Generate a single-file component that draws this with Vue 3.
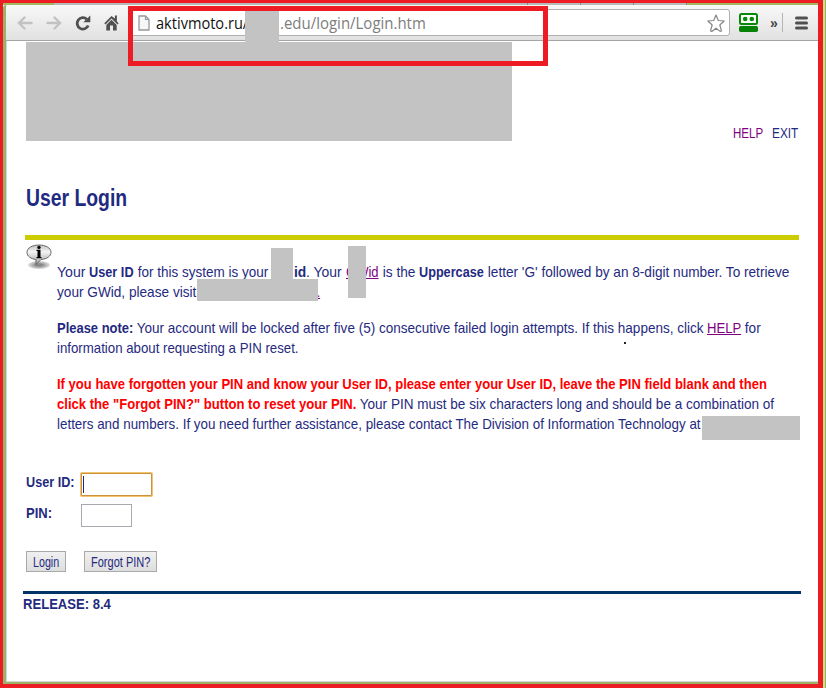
<script setup>
import { ref } from 'vue';

const userId = ref('');
const pin = ref('');

// Squeezes a run of text to the given width in pixels
const vFit = {
  mounted(el, binding) {
    const inner = el.firstElementChild;
    el.style.width = binding.value + 'px';
    inner.style.transform = `scaleX(${binding.value / inner.offsetWidth})`;
  },
};
</script>

<template>
  <div class="screen">
    <div class="tabs">
      <span class="tab-edge"></span>
      <span class="tab-edge"></span>
      <span class="tab-edge"></span>
      <span class="tab-edge"></span>
    </div>
    <div class="window">
      <header class="toolbar">
        <svg class="icon back" width="16" height="14" viewBox="0 0 16 14">
          <path d="M7.500 1.500 2 7l5.500 5.500M2.500 7H14.500" fill="none" stroke="#c2c2c2" stroke-width="2.400" stroke-linecap="round" />
        </svg>
        <svg class="icon forward" width="16" height="14" viewBox="0 0 16 14">
          <path d="M8.500 1.500 14 7l-5.500 5.500M13.500 7H1.500" fill="none" stroke="#c2c2c2" stroke-width="2.400" stroke-linecap="round" />
        </svg>
        <svg class="icon reload" width="16" height="16" viewBox="0 0 16 16">
          <path d="M11.800 4.200A5.700 5.700 0 1 0 13.200 10.500" fill="none" stroke="#505050" stroke-width="2.800" />
          <path d="M15.300 .5v6.700H8.300z" fill="#505050" />
        </svg>
        <svg class="icon home" width="15" height="16" viewBox="0 0 15 16">
          <path d="M7.500 1 .3 8.200l1.200 1.200 6-5.900 6 5.900 1.200-1.200-1.800-1.800V.5h-2v3z" fill="#505050" />
          <path d="m7.500 4.700 5.200 5.200v5.600H9v-5H6v5H2.300V9.900z" fill="#505050" />
        </svg>
        <div class="address">
          <svg class="doc" width="12" height="16" viewBox="0 0 12 16">
            <path d="M1 1h6.500L11 4.500V15H1z" fill="#f7f7f7" stroke="#999" stroke-width="1.300" />
            <path d="M7.500 1v3.500H11" fill="none" stroke="#999" stroke-width="1.200" />
          </svg>
          <span class="host" v-fit="92"><span>aktivmoto.ru/</span></span>
          <span class="path" v-fit="146"><span>.edu/login/Login.htm</span></span>
          <svg class="star" width="18" height="18" viewBox="0 0 18 18">
            <path d="m9 1 2.300 5.500 5.900.5-4.400 4 1.700 5.900q-1 .8-2 0L9 14.200l-3.500 2.700q-1 .8-2 0L5.200 11 .8 7l5.900-.5z" fill="#fff" stroke="#858585" stroke-width="1.200" stroke-linejoin="round" />
          </svg>
        </div>
        <svg class="robo" width="19" height="19" viewBox="0 0 19 19">
          <rect x="1" y="1" width="17" height="10" rx="1.500" fill="#fff" stroke="#078a07" stroke-width="2" />
          <circle cx="6.200" cy="6" r="2.300" fill="#078a07" />
          <circle cx="12.800" cy="6" r="2.300" fill="#078a07" />
          <rect x="0" y="13" width="19" height="6" rx="1.800" fill="#068306" />
        </svg>
        <span class="more">»</span>
        <span class="divider"></span>
        <svg class="menu" width="13" height="14" viewBox="0 0 13 14">
          <path d="M1.500 2h10M1.500 7h10M1.500 12h10" stroke="#505050" stroke-width="3" stroke-linecap="round" />
        </svg>
      </header>

      <main class="page">
        <div class="banner"></div>
        <nav class="links">
          <a class="visited" v-fit="30"><span>HELP</span></a>
          <a v-fit="26"><span>EXIT</span></a>
        </nav>
        <h1><span v-fit="101"><span>User Login</span></span></h1>
        <hr class="gold" />
        <section class="info">
          <svg class="bubble" width="26" height="26" viewBox="0 0 26 26">
            <defs>
              <linearGradient id="shine" x1="0" y1="0" x2="0" y2="1">
                <stop offset="0" stop-color="#c0c0c0" />
                <stop offset=".35" stop-color="#f4f4f4" />
                <stop offset="1" stop-color="#a0a0a0" />
              </linearGradient>
              <radialGradient id="shadow">
                <stop offset=".3" stop-color="#888" />
                <stop offset="1" stop-color="#bbb" stop-opacity=".5" />
              </radialGradient>
            </defs>
            <ellipse cx="13" cy="21" rx="11" ry="4" fill="url(#shadow)" />
            <path d="M13 1C6.500 1 1 3.800 1 8.300c0 3.900 4 6.700 9 7.200v5l5-5c6-.4 10-3.400 10-7.200 0-4.500-5.500-7.300-12-7.300z" fill="url(#shine)" stroke="#666" stroke-width="1" />
            <path d="M10.500 5.800h4V13h1v1.200h-5V13h1V7h-1z" fill="#000" />
            <circle cx="13" cy="3.400" r="1.700" fill="#000" />
          </svg>
          <div class="copy">
            <p>
              <span class="line">
                <span v-fit="32"><span>Your&nbsp;</span></span><b v-fit="45"><span>User ID</span></b><span v-fit="134"><span>&nbsp;for this system is your</span></span><b class="your-id" v-fit="12"><span>id</span></b><span v-fit="40"><span>. Your&nbsp;</span></span><a class="visited underlined" v-fit="33"><span>GWid</span></a><span v-fit="40"><span>&nbsp;is the&nbsp;</span></span><b v-fit="65"><span>Uppercase</span></b><span v-fit="305"><span>&nbsp;letter 'G' followed by an 8-digit number. To retrieve</span></span>
              </span>
              <span class="line">
                <span v-fit="139"><span>your GWid, please visit</span></span><a class="visited underlined site" v-fit="3"><span>.</span></a>
              </span>
            </p>
            <p>
              <span class="line">
                <b v-fit="76"><span>Please note:</span></b><span v-fit="574"><span>&nbsp;Your account will be locked after five (5) consecutive failed login attempts. If this happens, click&nbsp;</span></span><a class="visited underlined" v-fit="34"><span>HELP</span></a><span v-fit="20"><span>&nbsp;for</span></span>
              </span>
              <span class="line"><span v-fit="242"><span>information about requesting a PIN reset.</span></span></span>
            </p>
            <p>
              <span class="line warn"><b v-fit="710"><span>If you have forgotten your PIN and know your User ID, please enter your User ID, leave the PIN field blank and then</span></b></span>
              <span class="line"><b class="warn" v-fit="299"><span>click the "Forgot PIN?" button to reset your PIN.</span></b><span v-fit="418"><span>&nbsp;Your PIN must be six characters long and should be a combination of</span></span></span>
              <span class="line"><span v-fit="644"><span>letters and numbers. If you need further assistance, please contact The Division of Information Technology at</span></span></span>
            </p>
          </div>
        </section>

        <form class="login" @submit.prevent>
          <div class="field">
            <label for="user-id"><span v-fit="49"><span>User ID:</span></span></label>
            <div class="user-box">
              <input id="user-id" v-model="userId" class="user-input" type="text" />
            </div>
          </div>
          <div class="field">
            <label for="pin"><span v-fit="26"><span>PIN:</span></span></label>
            <input id="pin" v-model="pin" class="pin-input" type="password" />
          </div>
          <div class="buttons">
            <button type="submit" class="login-button"><span v-fit="26"><span>Login</span></span></button>
            <button type="button" class="forgot-button"><span v-fit="59"><span>Forgot PIN?</span></span></button>
          </div>
        </form>
        <hr class="navy" />
        <footer><span v-fit="88"><span>RELEASE: 8.4</span></span></footer>
      </main>
    </div>

    <!-- Redacted areas and the highlight over the address -->
    <i class="cover cover-host"></i>
    <i class="cover cover-name"></i>
    <i class="cover cover-gwid"></i>
    <i class="cover cover-site"></i>
    <i class="cover cover-contact"></i>
    <i class="speck"></i>
    <i class="highlight"></i>
    <i class="frame"></i>
    <i class="window-edge"></i>
  </div>
</template>

<style>
body {
  margin: 0;
  overflow: hidden;
}
</style>

<style scoped>
.screen {
  position: relative;
  width: 826px;
  height: 688px;
  box-sizing: border-box;
  padding: 3px 8px 4px 3px;
  overflow: hidden;
  background: #fff;
  font-family: "Liberation Sans", Arial, sans-serif;
  font-size: 15px;
  color: #1f2a80;
}

.tabs {
  display: flex;
  justify-content: flex-end;
  height: 2px;
  box-sizing: border-box;
  padding-right: 131px;
  background: linear-gradient(90deg, #a3b75f 0 51px, #b9b9b9 51px 683px, #a3b75f 683px);
}

.tab-edge {
  width: 52px;
  border-right: 1px solid #888;
}

.window {
  height: 679px;
  box-sizing: border-box;
  border-left: 3px solid #9eb267;
  border-bottom: 2px solid #9eb267;
  border-top-left-radius: 3px;
  box-shadow: inset 1px -1px #d5d5d5;
}

.toolbar {
  display: flex;
  align-items: center;
  height: 36px;
  box-sizing: border-box;
  padding-left: 11px;
  border-bottom: 1px solid #a5a5a5;
  border-top-left-radius: 3px;
  background: linear-gradient(#f8f8f8, #e1e1e1);
}

.icon {
  flex: none;
}

.forward {
  margin-left: 13px;
}

.reload {
  margin-left: 13px;
}

.home {
  margin-left: 13px;
}

.address {
  display: flex;
  align-items: center;
  width: 600px;
  height: 27px;
  box-sizing: border-box;
  margin-left: 11px;
  padding: 0 4px 0 7px;
  border: 1px solid #b0b0b0;
  border-radius: 3px;
  background: #fff;
  font: 16px/22px "Open Sans", "Noto Sans", sans-serif;
}

.doc {
  margin-right: 6px;
}

.host {
  color: #111;
}

.path {
  margin-left: 32px;
  color: #7d7d7d;
}

.star {
  margin-left: auto;
}

.robo {
  margin-left: 9px;
}

.more {
  width: 9px;
  margin-left: 12px;
  color: #444;
  font: bold 14px/18px "Liberation Sans", sans-serif;
}

.divider {
  width: 1px;
  height: 19px;
  margin-left: 3px;
  background: #b5b5b5;
}

.menu {
  margin-left: 12px;
}

.page {
  padding: 1px 17px 0 17px;
}

.banner {
  width: 486px;
  height: 99px;
  margin-left: 3px;
  background: #c3c3c3;
}

.links {
  display: flex;
  justify-content: flex-end;
  gap: 9px;
  height: 16px;
  margin-top: -16px;
  padding-right: 3px;
  line-height: 16px;
}

.host > span,
.path > span,
.page a > span,
.page span > span:only-child,
.page b > span {
  display: inline-block;
  transform-origin: 0 50%;
  white-space: nowrap;
}

.host,
.path,
.page a,
.line > *,
h1 > span,
label > span,
button > span,
footer > span {
  display: block;
  flex: none;
  white-space: nowrap;
}

.visited {
  color: #800080;
}

.underlined > span {
  text-decoration: underline;
}

.page .line > span:only-child {
  display: block;
}

h1 {
  height: 28px;
  margin: 43px 0 0 3px;
  font-size: 23px;
  line-height: 28px;
}

hr {
  border: 0;
  margin: 0;
}

.gold {
  width: 774px;
  height: 5px;
  margin: 23px 0 0 2px;
  background: #cc0;
}

.info {
  display: flex;
  height: 195px;
}

.bubble {
  flex: none;
  margin: 4px 0 0 3px;
}

.copy {
  padding: 22px 0 0 5px;
}

p {
  margin: 0 0 16px;
}

.line {
  display: flex;
  height: 20px;
  line-height: 20px;
}

.your-id {
  margin-left: 26px;
}

.site {
  margin-left: 121px;
}

.warn {
  color: #f00;
}

.login {
  padding: 37px 0 0 3px;
}

.field {
  display: flex;
  height: 31px;
  font-weight: bold;
}

label {
  width: 55px;
  line-height: 20px;
}

input {
  box-sizing: border-box;
  margin: 0;
  padding: 0 2px;
  border: 1px solid #a9a9b0;
  outline: 0;
  background: #fff;
  font: 15px "Liberation Sans", sans-serif;
}

.user-box {
  display: flex;
  position: relative;
}

/* text caret */
.user-box::after {
  content: "";
  position: absolute;
  left: 2px;
  top: 4px;
  width: 1px;
  height: 17px;
  background: #1f2a80;
}

.user-input {
  width: 71px;
  height: 23px;
  margin-top: 1px;
  border-color: #cc923c;
  border-radius: 1px;
  box-shadow: 0 0 0 1px #f2c46e;
}

.pin-input {
  width: 51px;
  height: 23px;
  margin-top: 1px;
}

.buttons {
  display: flex;
  gap: 18px;
  padding-top: 17px;
}

button {
  display: flex;
  height: 21px;
  box-sizing: border-box;
  padding: 0 6px;
  border: 1px solid #a9a9a9;
  background: linear-gradient(#f0f0f0, #dedede);
  color: #1f2a80;
  font: 14px/20px "Liberation Sans", sans-serif;
}

.navy {
  width: 778px;
  height: 3px;
  margin-top: 19px;
  background: #036;
}

footer {
  height: 20px;
  font-weight: bold;
  line-height: 20px;
}

.cover {
  position: absolute;
  background: #c3c3c3;
}

.cover-host {
  left: 245px;
  top: 11px;
  width: 34px;
  height: 31px;
}

.cover-name {
  left: 271px;
  top: 248px;
  width: 22px;
  height: 32px;
}

.cover-gwid {
  left: 348px;
  top: 246px;
  width: 18px;
  height: 52px;
}

.cover-site {
  left: 197px;
  top: 279px;
  width: 121px;
  height: 22px;
}

.cover-contact {
  left: 702px;
  top: 416px;
  width: 98px;
  height: 24px;
}

.speck {
  position: absolute;
  left: 624px;
  top: 342px;
  width: 2px;
  height: 2px;
  background: #222;
}

.highlight {
  position: absolute;
  left: 128px;
  top: 6px;
  width: 420px;
  height: 60px;
  box-sizing: border-box;
  border: 5px solid #ed1c24;
}

.frame {
  position: absolute;
  left: 0;
  top: 0;
  width: 823px;
  height: 688px;
  box-sizing: border-box;
  border: solid #ed1c24;
  border-width: 3px 5px 4px 3px;
}

.window-edge {
  position: absolute;
  right: 0;
  top: 0;
  width: 3px;
  height: 688px;
  background: linear-gradient(90deg, #c9e47d 0 2px, #9eaa70 2px);
}
</style>
